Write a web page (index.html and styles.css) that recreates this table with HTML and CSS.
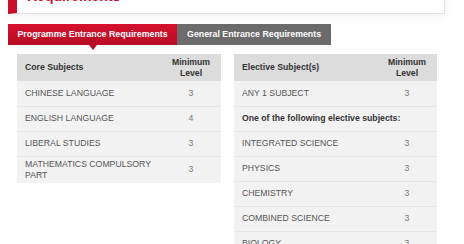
FILE: index.html
```html
<!DOCTYPE html>
<html lang="en">
<head>
<meta charset="utf-8">
<title>Entrance Requirements</title>
<link rel="stylesheet" href="styles.css">
</head>
<body>
<div class="page">
  <div class="hero">
    <h1 class="hero-title">Entrance<br>Requirements</h1>
  </div>

  <div class="tabs">
    <div class="tab tab-active">Programme Entrance Requirements</div>
    <div class="tab">General Entrance Requirements</div>
  </div>

  <div class="tables">
    <table class="req">
      <thead>
        <tr><th class="subj">Core Subjects</th><th class="lvl">Minimum<br>Level</th></tr>
      </thead>
      <tbody>
        <tr><td class="subj">CHINESE LANGUAGE</td><td class="lvl">3</td></tr>
        <tr><td class="subj">ENGLISH LANGUAGE</td><td class="lvl">4</td></tr>
        <tr><td class="subj">LIBERAL STUDIES</td><td class="lvl">3</td></tr>
        <tr><td class="subj">MATHEMATICS COMPULSORY PART</td><td class="lvl">3</td></tr>
      </tbody>
    </table>

    <table class="req">
      <thead>
        <tr><th class="subj">Elective Subject(s)</th><th class="lvl">Minimum<br>Level</th></tr>
      </thead>
      <tbody>
        <tr><td class="subj">ANY 1 SUBJECT</td><td class="lvl">3</td></tr>
        <tr><td class="subj note" colspan="2">One of the following elective subjects:</td></tr>
        <tr><td class="subj">INTEGRATED SCIENCE</td><td class="lvl">3</td></tr>
        <tr><td class="subj">PHYSICS</td><td class="lvl">3</td></tr>
        <tr><td class="subj">CHEMISTRY</td><td class="lvl">3</td></tr>
        <tr><td class="subj">COMBINED SCIENCE</td><td class="lvl">3</td></tr>
        <tr><td class="subj">BIOLOGY</td><td class="lvl">3</td></tr>
      </tbody>
    </table>
  </div>
</div>
</body>
</html>
```

FILE: styles.css
```css
* { box-sizing: border-box; }
html, body { margin: 0; padding: 0; background: #fff; }
body {
  font-family: "Liberation Sans", Arial, sans-serif;
  overflow: hidden;
}
.page {
  width: 464px;
  height: 244px;
  padding: 0 0 0 8px;
  overflow: hidden;
}
.hero {
  margin: -36px 19px 0 0;
  height: 50px;
  background: #fff;
  border: 1px solid #e2e2e2;
  border-left: 9px solid #c8102e;
  box-shadow: 0 3px 10px rgba(0, 0, 0, 0.06);
  padding: 0 0 0 10px;
  display: flex;
  align-items: flex-end;
}
.hero-title {
  margin: 0 0 9px 0;
  font-size: 14px;
  line-height: 16px;
  font-weight: bold;
  color: #c8102e;
}
.tabs {
  display: flex;
  margin-top: 10px;
}
.tab {
  height: 21px;
  line-height: 21px;
  padding: 0 10px;
  font-size: 8.8px;
  font-weight: bold;
  color: #fff;
  background: #6b6b6b;
  white-space: nowrap;
}
.tab-active {
  position: relative;
  padding: 0 9.5px;
  background: linear-gradient(#d5112d, #b90d25);
}
.tab-active::after {
  content: "";
  position: absolute;
  left: 50%;
  bottom: -5px;
  margin-left: -4px;
  border-left: 4px solid transparent;
  border-right: 4px solid transparent;
  border-top: 5px solid #b90d25;
}
.tables {
  display: grid;
  grid-template-columns: 204px 203px;
  column-gap: 13px;
  align-items: start;
  margin: 9px 0 0 9px;
}
.req {
  width: 100%;
  border-collapse: collapse;
  font-size: 8.7px;
}
.req th {
  background: #dcdcdc;
  color: #333;
  font-weight: bold;
  height: 27px;
  line-height: 11px;
  padding: 2px 4px 2px 8px;
  vertical-align: middle;
}
.req th.subj { text-align: left; }
.req th.lvl { text-align: center; width: 60px; padding: 2px 8px; }
.req td {
  background: #f2f2f2;
  color: #555;
  height: 25px;
  line-height: 11px;
  padding: 2px 4px 2px 8px;
  vertical-align: middle;
  border-top: 1px solid #e6e6e6;
}
.req tbody tr:first-child td { border-top: 0; }
.req td.lvl { text-align: center; color: #777; width: 60px; padding: 2px 8px; }
.req td.note { font-weight: bold; color: #333; }
```
